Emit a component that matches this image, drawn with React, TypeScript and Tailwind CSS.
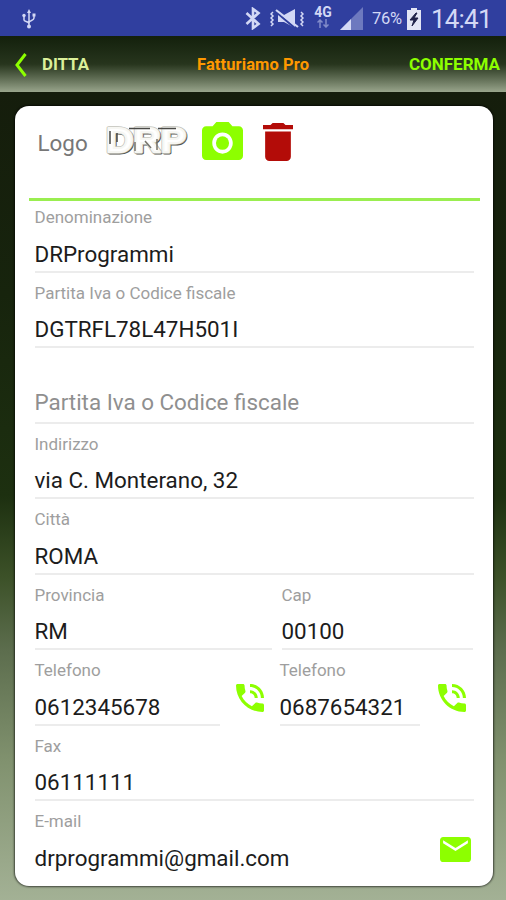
import React from "react";

const Field = ({ label, value, className = "" }: { label: string; value: string; className?: string }) => (
  <div className={`h-[75.5px] shrink-0 ${className}`}>
    <div className="h-[71.5px] border-b-2 border-[#ececec]">
      <p className="h-5 pt-[6px] text-[17px] leading-5 text-[#9e9e9e]">{label}</p>
      <p className="mt-[18.5px] whitespace-nowrap text-[22.4px] leading-7 text-[#1c1c1c]">{value}</p>
    </div>
  </div>
);

const PhoneIcon = () => (
  <svg viewBox="3 3 18 18" className="h-[28px] w-[28px]" fill="#8dff00">
    <path d="M20 15.5c-1.25 0-2.45-.2-3.57-.57-.35-.11-.74-.03-1.02.24l-2.2 2.2c-2.83-1.44-5.15-3.75-6.59-6.59l2.2-2.21c.28-.26.36-.65.25-1C8.7 6.45 8.5 5.25 8.5 4c0-.55-.45-1-1-1H4c-.55 0-1 .45-1 1 0 9.39 7.61 17 17 17 .55 0 1-.45 1-1v-3.5c0-.55-.45-1-1-1zM19 12h2c0-4.97-4.03-9-9-9v2c3.87 0 7 3.13 7 7zm-4 0h2c0-2.76-2.24-5-5-5v2c1.66 0 3 1.34 3 3z" />
  </svg>
);

const Logo = () => (
  <svg className="h-9 w-[90px] overflow-visible" viewBox="0 0 90 36">
    <g fontFamily="Liberation Sans" fontWeight="bold" fontSize="35" strokeLinejoin="round">
      <text x="3" y="31" textLength="80" lengthAdjust="spacingAndGlyphs" fill="#55554f" stroke="#55554f" strokeWidth="3">DRP</text>
      <text x="2" y="30" textLength="80" lengthAdjust="spacingAndGlyphs" fill="#fff" stroke="#c4c4bc" strokeWidth="3.500">DRP</text>
      <text x="2" y="30" textLength="80" lengthAdjust="spacingAndGlyphs" fill="#fff" stroke="#f7f7f3" strokeWidth="2">DRP</text>
    </g>
    <path d="M25 6.500h21M54 6.500h18M6 9v13M13 11v9" stroke="#4a4a46" strokeWidth="1.500" />
    <path d="M31 20v9M53 17v11M41 19l6 7" stroke="#77736a" strokeWidth="1.500" />
  </svg>
);

const StatusBar = () => (
  <div className="flex h-9 shrink-0 items-center bg-[#303f9f] pt-px pr-[14px] pl-[22px] text-[#d3d8f5]">
    <svg className="h-5 w-[14px]" viewBox="0 0 14 20" fill="none" stroke="currentColor" strokeWidth="1.5">
      <path d="M7 3v14M2 7v4c0 2 5 1 5 4M12 6v3c0 3-5 2-5 5" />
      <path d="M7 0l2 4H5z" fill="currentColor" stroke="none" />
      <circle cx="7" cy="17.5" r="2" fill="currentColor" stroke="none" />
      <circle cx="2" cy="6.5" r="1.7" fill="currentColor" stroke="none" />
      <path d="M10.5 4.500h3v3h-3z" fill="currentColor" stroke="none" />
    </svg>
    <div className="ml-auto flex items-center">
      <svg className="h-[23px] w-4" viewBox="0 0 16 23" fill="none" stroke="currentColor" strokeWidth="2.6">
        <path d="M1.500 6l12 11L8 21V2L13.500 6l-12 11" />
      </svg>
      <svg className="ml-[9px] h-5 w-[34px]" viewBox="0 0 34 20" fill="none" stroke="currentColor">
        <path d="M3 3l-2 2 2 2-2 2 2 2-2 2 2 2-2 2M31 3l2 2-2 2 2 2-2 2 2 2-2 2 2 2" strokeWidth="1.500" />
        <path d="M8 6h6l11-6v19l-11-6H8z" fill="currentColor" stroke="none" />
        <path d="M6 3l20 17" stroke="#303f9f" strokeWidth="2" />
        <path d="M6 1l22 17" strokeWidth="2.200" />
      </svg>
      <div className="ml-[9px] h-[27px] w-5 text-center text-[14px] leading-[14px] font-bold">
        4G
        <svg className="mx-auto h-[9px] w-3 opacity-50" viewBox="0 0 12 9" fill="none" stroke="currentColor" strokeWidth="1.500">
          <path d="M3 9V1M0.500 3.500L3 1l2.500 2.500M9 0v8M6.500 5.500L9 8l2.500-2.500" />
        </svg>
      </div>
      <svg className="ml-[7px] h-[23px] w-[23px]" viewBox="0 0 23 23" fill="currentColor">
        <path d="M23 0v23H0z" opacity=".38" />
        <path d="M11 12v11H0z" />
      </svg>
      <span className="ml-[9px] w-[31px] pt-[2px] text-[16.500px] tracking-[-0.3px]">76%</span>
      <svg className="ml-1 h-[22px] w-[14px]" viewBox="0 0 14 22">
        <path d="M4 0h6v2h4v20H0V2h4z" fill="#e3e6f5" />
        <path d="M9 5l-6 7h4l-2 6 6-8H7l3-5z" fill="#20234a" stroke="#20234a" />
      </svg>
      <span className="ml-[10px] w-[61px] text-[26px] leading-9 tracking-[-0.8px]">14:41</span>
    </div>
  </div>
);

const Header = () => (
  <div className="flex h-14 shrink-0 items-center bg-linear-to-b from-[#13200c] via-[#27351d] via-50% to-[#99a58c] pt-[2px] pr-[6px] pl-[15px] font-bold">
    <svg className="h-6 w-3" viewBox="0 0 12 24" fill="none" stroke="#8dff00" strokeWidth="3">
      <path d="M10.500 1L2 12l8.500 11" />
    </svg>
    <span className="ml-[15px] w-[100px] text-[16.800px] text-[#dcf09a]">DITTA</span>
    <span className="ml-[55px] text-[16.500px] tracking-[0.1px] text-[#ff9800]">Fatturiamo Pro</span>
    <span className="ml-auto text-[17px] text-[#8dff00]">CONFERMA</span>
  </div>
);

const App = () => {
  return (
    <div className="flex h-[900px] w-[506px] flex-col overflow-hidden font-['Roboto',sans-serif]">
      <StatusBar />
      <Header />
      <main className="flex-1 bg-[linear-gradient(to_bottom,#151d0c_0%,#17240d_25%,#1d3010_50%,#3c5128_60%,#5c6d4d_69%,#81926f_83%,#a3b195_100%)] pt-[14px] pr-[13px] pl-[14.5px]">
        <div className="h-[780px] rounded-[14px] bg-white pr-[19.5px] pl-[20px] shadow-[0_0_2px_1px_rgba(0,0,0,0.6)]">
          <div className="-mx-[6px] flex h-[95px] border-b-[3px] border-[#9aee50] pt-4 pl-[9px]">
            <span className="mt-[5px] w-[66px] text-[22.4px] leading-8 text-[#777777]">Logo</span>
            <Logo />
            <svg className="ml-[8px] h-[38px] w-[41px]" viewBox="2 2 20 18" preserveAspectRatio="none" fill="#8dff00">
              <path d="M9 2L7.170 4H4c-1.100 0-2 .9-2 2v12c0 1.100.9 2 2 2h16c1.100 0 2-.9 2-2V6c0-1.100-.9-2-2-2h-3.170L15 2H9zm3 15c-2.760 0-5-2.240-5-5s2.240-5 5-5 5 2.240 5 5-2.240 5-5 5z" />
              <circle cx="12" cy="12" r="3.200" />
            </svg>
            <svg className="mt-px ml-[20px] h-[38px] w-[30px]" viewBox="5 3 14 18" preserveAspectRatio="none" fill="#b30c08">
              <path d="M6 19c0 1.100.9 2 2 2h8c1.100 0 2-.9 2-2V7H6v12zM19 4h-3.500l-1-1h-5l-1 1H5v2h14V4z" />
            </svg>
          </div>
          <Field label="Denominazione" value="DRProgrammi" />
          <Field label="Partita Iva o Codice fiscale" value="DGTRFL78L47H501I" />
          <div className="h-[75.5px]">
            <p className="h-[71.5px] border-b-2 border-[#ececec] pt-[36px] text-[22.4px] leading-7 text-[#8f8f8f]">
              Partita Iva o Codice fiscale
            </p>
          </div>
          <Field label="Indirizzo" value="via C. Monterano, 32" />
          <Field label="Città" value="ROMA" />
          <div className="flex">
            <Field label="Provincia" value="RM" className="w-[237px]" />
            <Field label="Cap" value="00100" className="ml-[10px] w-[191px]" />
          </div>
          <div className="flex">
            <Field label="Telefono" value="0612345678" className="w-[185px]" />
            <div className="ml-4 w-[44px] pt-[30px]">
              <PhoneIcon />
            </div>
            <Field label="Telefono" value="0687654321" className="w-[140px]" />
            <div className="ml-[18.5px] pt-[30px]">
              <PhoneIcon />
            </div>
          </div>
          <Field label="Fax" value="06111111" />
          <div className="flex justify-between">
            <div>
              <p className="h-5 pt-[6px] text-[17px] leading-5 text-[#9e9e9e]">E-mail</p>
              <p className="mt-[18.5px] text-[22.4px] leading-7 text-[#1c1c1c]">drprogrammi@gmail.com</p>
            </div>
            <svg className="mt-[32px] mr-[3px] h-[25px] w-[31px]" viewBox="2 4 20 16" preserveAspectRatio="none" fill="#8dff00">
              <path d="M20 4H4c-1.100 0-2 .9-2 2v12c0 1.100.9 2 2 2h16c1.100 0 2-.9 2-2V6c0-1.100-.9-2-2-2zm0 4l-8 5-8-5V6l8 5 8-5v2z" />
            </svg>
          </div>
        </div>
      </main>
    </div>
  );
};

export default App;
